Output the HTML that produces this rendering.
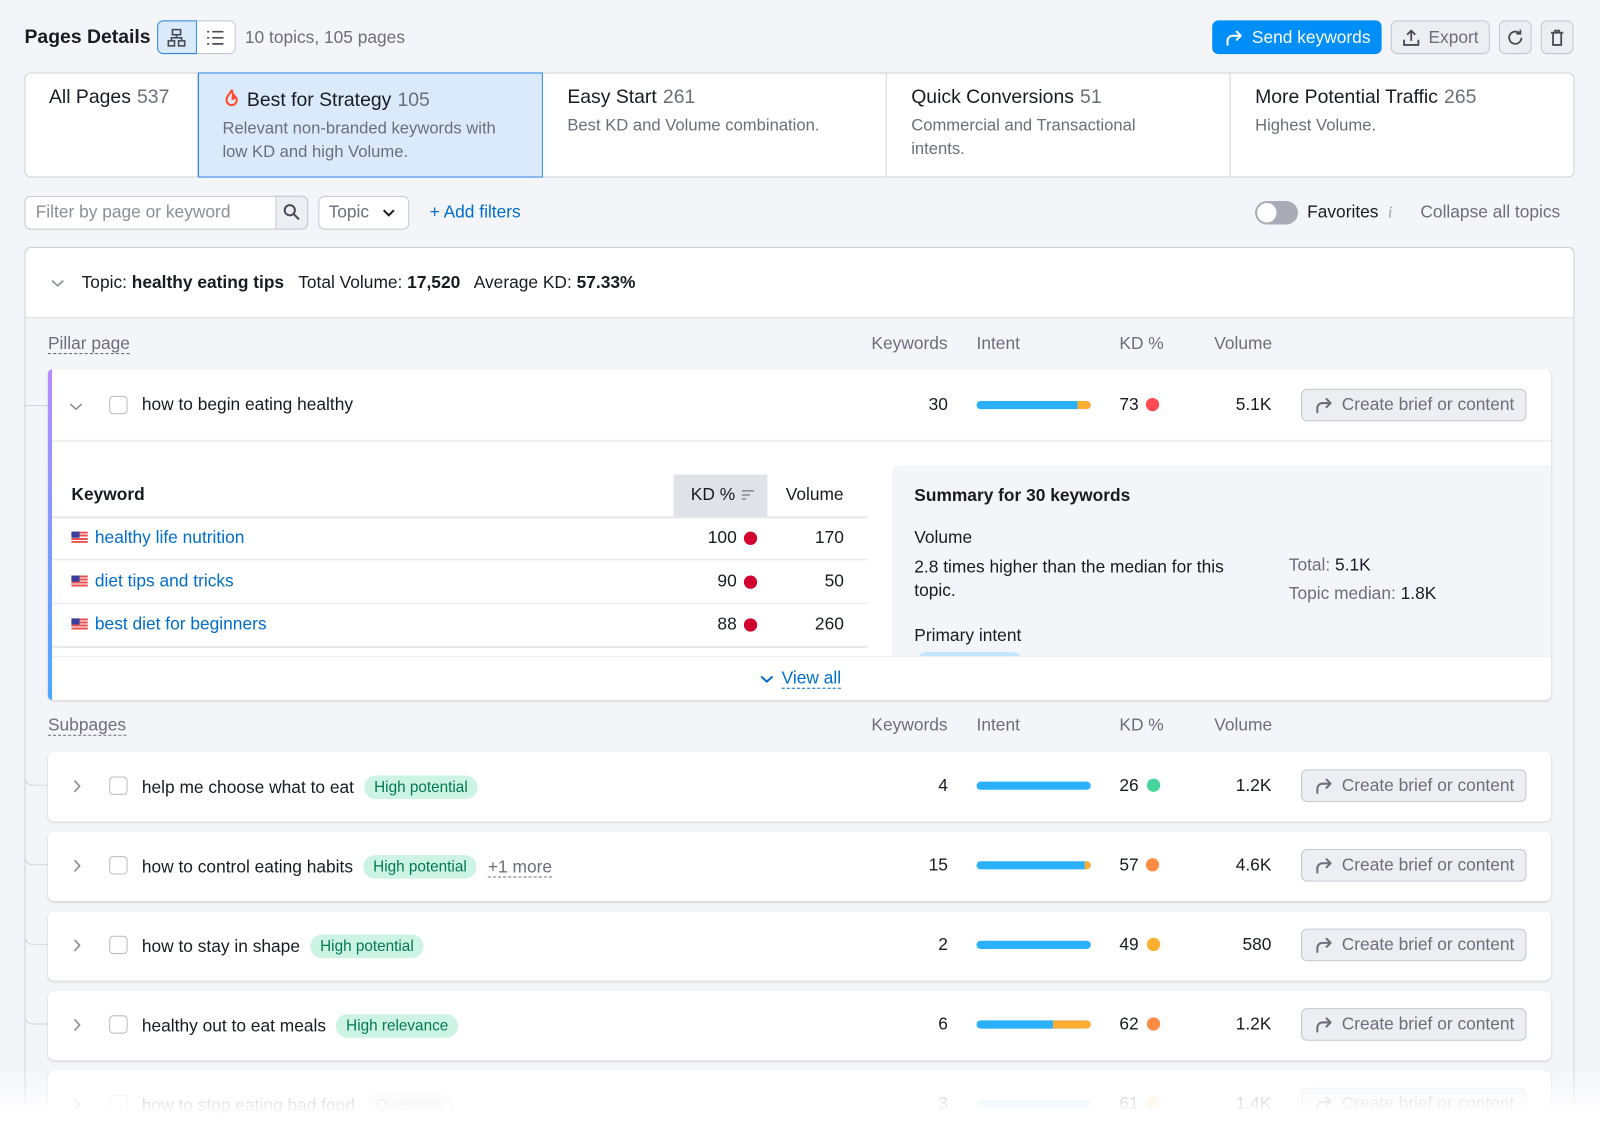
<!DOCTYPE html>
<html style="overflow:hidden;width:1600px;height:1127px"><head><meta charset="utf-8"><style>
*{box-sizing:border-box;margin:0;padding:0}
body{width:1600px;height:1127px;overflow:hidden;background:#f4f5f9;font-family:"Liberation Sans",sans-serif;color:#191b23;font-size:17px;position:relative}
#w{position:absolute;left:0;top:0;width:1568px;height:1105px;overflow:hidden;transform:scale(1.0204);transform-origin:0 0}
.a{position:absolute;white-space:nowrap}
.g{color:#6c6e79}
.btn{position:absolute;border:1px solid #c4c7cf;border-radius:6px;background:#edeef2;color:#6c6e79;display:flex;align-items:center;justify-content:center;gap:8px;font-size:17px}
.tab{position:absolute;top:71px;height:103px;padding:14px 24px;border-right:1px solid #d0d2d8}
.tab b{font-weight:normal;font-size:19px;color:#191b23}
.tab .n{font-size:19px;color:#6c6e79;margin-left:6px}
.tab p{color:#6c6e79;font-size:16.3px;line-height:23px;margin-top:5px}
.row{position:absolute;left:47px;width:1473px;height:68px;background:#fff;border-radius:6px;box-shadow:0 1px 2px rgba(0,0,0,.12)}
.cb{position:absolute;width:18px;height:18px;border:1px solid #b8bbc3;border-radius:4px;background:#fff}
.bar{position:absolute;left:957px;width:112px;height:8px;border-radius:4px;background:#2bb0fb;overflow:hidden}
.bar i{position:absolute;right:0;top:0;bottom:0;background:#ffae32}
.dot{position:absolute;width:13px;height:13px;border-radius:50%}
.tag{display:inline-block;background:#cdf3e5;color:#00794d;font-size:15px;padding:3px 10px;border-radius:12px;margin-left:5px;vertical-align:1px}
.cbtn{position:absolute;left:1275px;width:221px;height:32px}
.ul{border-bottom:1px dashed #6c6e79}
.kw{color:#006dca}
.flag{display:inline-block;width:16px;height:11px;background:repeating-linear-gradient(#e84f4f 0 2px,#fff 2px 3px);position:relative;vertical-align:0;margin-right:7px}
.flag:before{content:"";position:absolute;left:0;top:0;width:8px;height:6px;background:#3a3f9e}
</style></head><body><div id="w">
<svg width="0" height="0" style="position:absolute"><defs><symbol id="arr" viewBox="0 0 20 20"><path d="M4 17v-4a5 5 0 0 1 5-5h8M13 4l4 4-4 4" fill="none" stroke="currentColor" stroke-width="2" stroke-linecap="round" stroke-linejoin="round"/></symbol></defs></svg>

<div class="a" style="left:24px;top:26px;font-size:19px;font-weight:bold">Pages Details</div>
<div class="a" style="left:154px;top:20px;width:77px;height:33px;border:1px solid #c4c7cf;border-radius:6px;background:#fff"></div>
<div class="a" style="left:154px;top:20px;width:39px;height:33px;border:1px solid #2b8ae6;border-radius:6px 0 0 6px;background:#dbeafb"></div>
<svg class="a" style="left:164px;top:28px" width="18" height="18" viewBox="0 0 18 18" fill="none" stroke="#4a4d57" stroke-width="1.6"><rect x="5" y="1" width="8" height="5"/><rect x="1" y="12" width="6" height="5"/><rect x="11" y="12" width="6" height="5"/><path d="M9 6v3M4 12V9h10v3"/></svg>
<svg class="a" style="left:202px;top:28px" width="18" height="18" viewBox="0 0 18 18" stroke="#4a4d57" stroke-width="1.6"><path d="M6 3h11M6 9h11M6 15h11M1 3h2M1 9h2M1 15h2"/></svg>
<div class="a g" style="left:240px;top:27px">10 topics, 105 pages</div>

<div class="btn" style="left:1188px;top:20px;width:166px;height:33px;background:#008ff8;border-color:#008ff8;color:#fff"><svg width="20" height="20" style="color:#fff"><use href="#arr"/></svg>Send keywords</div>
<div class="btn" style="left:1363px;top:20px;width:97px;height:33px"><svg width="18" height="18" viewBox="0 0 18 18" fill="none" stroke="#4a4d57" stroke-width="1.8"><path d="M9 12V2M5 6l4-4 4 4M2 11v5h14v-5"/></svg>Export</div>
<div class="btn" style="left:1469px;top:20px;width:32px;height:33px"><svg width="18" height="18" viewBox="0 0 18 18" fill="none" stroke="#4a4d57" stroke-width="1.8"><path d="M15 9a6 6 0 1 1-2-4.5M14 1v4h-4"/></svg></div>
<div class="btn" style="left:1510px;top:20px;width:32px;height:33px"><svg width="18" height="18" viewBox="0 0 18 18" fill="none" stroke="#4a4d57" stroke-width="1.8"><path d="M3 4h12M7 4V2h4v2M5 4v12h8V4"/></svg></div>

<div class="a" style="left:24px;top:71px;width:1519px;height:103px;background:#fff;border:1px solid #d0d2d8;border-radius:6px"></div>
<div class="tab" style="left:24px;width:170px"><b>All Pages</b><span class="n">537</span></div>
<div class="tab" style="left:194px;width:338px;background:#dbeafb;border:1px solid #2b8ae6;padding-left:23px"><svg width="18" height="20" viewBox="0 0 18 20" style="vertical-align:-2px;margin-right:6px" fill="none" stroke="#ff4b2b" stroke-width="2"><path d="M9 2c0 3-5 5-5 10a5 5 0 0 0 10 0c0-2-1-3-2-4 0 2-1 3-2 3 0-2 1-5-1-9z"/></svg><b>Best for Strategy</b><span class="n">105</span><p>Relevant non-branded keywords with<br>low KD and high Volume.</p></div>
<div class="tab" style="left:532px;width:337px"><b>Easy Start</b><span class="n">261</span><p>Best KD and Volume combination.</p></div>
<div class="tab" style="left:869px;width:337px"><b>Quick Conversions</b><span class="n">51</span><p>Commercial and Transactional<br>intents.</p></div>
<div class="tab" style="left:1206px;width:337px;border:none"><b>More Potential Traffic</b><span class="n">265</span><p>Highest Volume.</p></div>

<div class="a" style="left:24px;top:192px;width:278px;height:33px;border:1px solid #c4c7cf;border-radius:6px;background:#fff"></div>
<div class="a" style="left:270px;top:192px;width:32px;height:33px;border:1px solid #c4c7cf;border-radius:0 6px 6px 0;background:#edeef2"></div>
<svg class="a" style="left:277px;top:199px" width="18" height="18" viewBox="0 0 18 18" fill="none" stroke="#4a4d57" stroke-width="2"><circle cx="7" cy="7" r="5"/><path d="M11 11l5 5"/></svg>
<div class="a" style="left:35px;top:198px;color:#8b8e98">Filter by page or keyword</div>
<div class="a" style="left:312px;top:192px;width:89px;height:33px;border:1px solid #c4c7cf;border-radius:6px;background:#fff"></div>
<div class="a g" style="left:322px;top:198px">Topic</div>
<svg class="a" style="left:375px;top:204px" width="12" height="9" viewBox="0 0 12 9" fill="none" stroke="#191b23" stroke-width="2"><path d="M1 2l5 5 5-5"/></svg>
<div class="a" style="left:421px;top:198px;color:#006dca">+ Add filters</div>

<div class="a" style="left:1230px;top:197px;width:42px;height:23px;border-radius:12px;background:#a9acb6"></div>
<div class="a" style="left:1232px;top:199px;width:19px;height:19px;border-radius:50%;background:#fff"></div>
<div class="a" style="left:1281px;top:198px">Favorites</div>
<div class="a" style="left:1360px;top:198px;color:#a0a3ac;font-style:italic;font-family:'Liberation Serif',serif">i</div>
<div class="a g" style="left:1392px;top:198px">Collapse all topics</div>

<div class="a" style="left:24px;top:242px;width:1519px;height:880px;border:1px solid #d0d2d8;border-radius:6px;background:#f4f5f9"></div>
<div class="a" style="left:25px;top:243px;width:1517px;height:69px;background:#fff;border-bottom:1px solid #d0d2d8;border-radius:6px 6px 0 0"></div>
<svg class="a" style="left:50px;top:273px" width="13" height="9" viewBox="0 0 13 9" fill="none" stroke="#8b8e98" stroke-width="1.6"><path d="M1 2l5.5 5 5.5-5"/></svg>
<div class="a" style="left:80px;top:267px">Topic: <b>healthy eating tips</b>&nbsp;&nbsp; Total Volume: <b>17,520</b>&nbsp;&nbsp; Average KD: <b>57.33%</b></div>

<div class="a g" style="left:47px;top:327px"><span class="ul">Pillar page</span></div>
<div class="a g" style="left:854px;top:327px">Keywords</div><div class="a g" style="left:957px;top:327px">Intent</div><div class="a g" style="left:1097px;top:327px">KD %</div><div class="a g" style="left:1190px;top:327px">Volume</div>

<div class="a" style="left:24px;top:397px;width:23px;height:1px;background:#d0d2d8"></div>
<div class="a" style="left:24px;top:750px;width:23px;height:20px;border-left:1px solid #d0d2d8;border-bottom:1px solid #d0d2d8;border-radius:0 0 0 8px"></div>
<div class="a" style="left:24px;top:828px;width:23px;height:20px;border-left:1px solid #d0d2d8;border-bottom:1px solid #d0d2d8;border-radius:0 0 0 8px"></div>
<div class="a" style="left:24px;top:906px;width:23px;height:20px;border-left:1px solid #d0d2d8;border-bottom:1px solid #d0d2d8;border-radius:0 0 0 8px"></div>
<div class="a" style="left:24px;top:984px;width:23px;height:20px;border-left:1px solid #d0d2d8;border-bottom:1px solid #d0d2d8;border-radius:0 0 0 8px"></div>

<div class="a" style="left:47px;top:362px;width:1473px;height:324px;background:#fff;border-radius:6px;box-shadow:0 1px 2px rgba(0,0,0,.12)"></div>
<div class="a" style="left:47px;top:362px;width:4px;height:324px;border-radius:4px 0 0 4px;background:linear-gradient(#b78cff,#4aa8ff)"></div>
<div class="a" style="left:51px;top:431px;width:1469px;height:2px;background:#eceef2"></div>
<svg class="a" style="left:68px;top:394px" width="13" height="9" viewBox="0 0 13 9" fill="none" stroke="#8b8e98" stroke-width="1.6"><path d="M1 2l5.5 5 5.5-5"/></svg>
<div class="cb" style="left:107px;top:388px"></div>
<div class="a" style="left:139px;top:387px">how to begin eating healthy</div>
<div class="a" style="left:889px;top:387px;width:40px;text-align:right">30</div>
<div class="bar" style="top:393px"><i style="width:13px"></i></div>
<div class="a" style="left:1097px;top:387px">73</div><div class="dot" style="left:1123px;top:390px;background:#ff4953"></div>
<div class="a" style="left:1186px;top:387px;width:60px;text-align:right">5.1K</div>
<div class="btn cbtn" style="top:381px"><svg width="20" height="20"><use href="#arr"/></svg>Create brief or content</div>

<div class="a" style="left:660px;top:465px;width:92px;height:41px;background:#e0e1e9"></div>
<div class="a" style="left:70px;top:475px;font-weight:bold">Keyword</div>
<div class="a" style="left:677px;top:475px">KD %</div>
<svg class="a" style="left:726px;top:479px" width="14" height="12" viewBox="0 0 14 12" stroke="#8b8e98" stroke-width="1.6"><path d="M1 2h12M1 6h8M1 10h4"/></svg>
<div class="a" style="left:770px;top:475px">Volume</div>
<div class="a" style="left:51px;top:506px;width:799px;height:2px;background:#e6e7eb"></div>
<div class="a" style="left:51px;top:548px;width:799px;height:1px;background:#e6e7eb"></div>
<div class="a" style="left:51px;top:591px;width:799px;height:1px;background:#e6e7eb"></div>
<div class="a" style="left:51px;top:633px;width:799px;height:2px;background:#e6e7eb"></div>
<div class="a" style="left:70px;top:517px"><span class="flag"></span><span class="kw">healthy life nutrition</span></div>
<div class="a" style="left:670px;top:517px;width:52px;text-align:right">100</div><div class="dot" style="left:729px;top:521px;background:#d1002f"></div><div class="a" style="left:770px;top:517px;width:57px;text-align:right">170</div>
<div class="a" style="left:70px;top:560px"><span class="flag"></span><span class="kw">diet tips and tricks</span></div>
<div class="a" style="left:670px;top:560px;width:52px;text-align:right">90</div><div class="dot" style="left:729px;top:564px;background:#d1002f"></div><div class="a" style="left:770px;top:560px;width:57px;text-align:right">50</div>
<div class="a" style="left:70px;top:602px"><span class="flag"></span><span class="kw">best diet for beginners</span></div>
<div class="a" style="left:670px;top:602px;width:52px;text-align:right">88</div><div class="dot" style="left:729px;top:606px;background:#d1002f"></div><div class="a" style="left:770px;top:602px;width:57px;text-align:right">260</div>

<div class="a" style="left:874px;top:456px;width:646px;height:187px;background:#f4f5f9;border-radius:8px 0 0 0;overflow:hidden">
<div class="a" style="left:22px;top:20px;font-weight:bold">Summary for 30 keywords</div>
<div class="a" style="left:22px;top:61px">Volume</div>
<div class="a" style="left:22px;top:88px;line-height:23px">2.8 times higher than the median for this<br>topic.</div>
<div class="a" style="left:389px;top:88px"><span class="g">Total:</span> 5.1K</div>
<div class="a" style="left:389px;top:116px"><span class="g">Topic median:</span> 1.8K</div>
<div class="a" style="left:22px;top:157px">Primary intent</div>
<div class="a" style="left:24px;top:183px;width:104px;height:20px;border-radius:10px;background:#c2e7ff"></div>
</div>
<div class="a" style="left:51px;top:643px;width:1469px;height:1px;background:#eceef2"></div>
<svg class="a" style="left:745px;top:661px" width="13" height="9" viewBox="0 0 13 9" fill="none" stroke="#006dca" stroke-width="2"><path d="M1 2l5.5 5 5.5-5"/></svg>
<div class="a" style="left:766px;top:655px;color:#006dca"><span style="border-bottom:1px dashed #006dca">View all</span></div>

<div class="a g" style="left:47px;top:701px"><span class="ul">Subpages</span></div>
<div class="a g" style="left:854px;top:701px">Keywords</div><div class="a g" style="left:957px;top:701px">Intent</div><div class="a g" style="left:1097px;top:701px">KD %</div><div class="a g" style="left:1190px;top:701px">Volume</div>

<div class="row" style="top:737px"></div>
<div class="row" style="top:815px"></div>
<div class="row" style="top:893px"></div>
<div class="row" style="top:971px"></div>
<div class="row" style="top:1049px"></div>

<svg class="a" style="left:71px;top:764px" width="9" height="13" viewBox="0 0 9 13" fill="none" stroke="#8b8e98" stroke-width="1.6"><path d="M2 1l5 5.5-5 5.5"/></svg>
<div class="cb" style="left:107px;top:761px"></div>
<div class="a" style="left:139px;top:760px">help me choose what to eat <span class="tag">High potential</span></div>
<div class="a" style="left:889px;top:760px;width:40px;text-align:right">4</div>
<div class="bar" style="top:766px"></div>
<div class="a" style="left:1097px;top:760px">26</div><div class="dot" style="left:1124px;top:763px;background:#45d59c"></div>
<div class="a" style="left:1186px;top:760px;width:60px;text-align:right">1.2K</div>
<div class="btn cbtn" style="top:754px"><svg width="20" height="20"><use href="#arr"/></svg>Create brief or content</div>

<svg class="a" style="left:71px;top:842px" width="9" height="13" viewBox="0 0 9 13" fill="none" stroke="#8b8e98" stroke-width="1.6"><path d="M2 1l5 5.5-5 5.5"/></svg>
<div class="cb" style="left:107px;top:839px"></div>
<div class="a" style="left:139px;top:838px">how to control eating habits <span class="tag">High potential</span> <span class="g ul" style="margin-left:6px">+1 more</span></div>
<div class="a" style="left:889px;top:838px;width:40px;text-align:right">15</div>
<div class="bar" style="top:844px"><i style="width:6px"></i></div>
<div class="a" style="left:1097px;top:838px">57</div><div class="dot" style="left:1123px;top:841px;background:#ff8c43"></div>
<div class="a" style="left:1186px;top:838px;width:60px;text-align:right">4.6K</div>
<div class="btn cbtn" style="top:832px"><svg width="20" height="20"><use href="#arr"/></svg>Create brief or content</div>

<svg class="a" style="left:71px;top:920px" width="9" height="13" viewBox="0 0 9 13" fill="none" stroke="#8b8e98" stroke-width="1.6"><path d="M2 1l5 5.5-5 5.5"/></svg>
<div class="cb" style="left:107px;top:917px"></div>
<div class="a" style="left:139px;top:916px">how to stay in shape <span class="tag">High potential</span></div>
<div class="a" style="left:889px;top:916px;width:40px;text-align:right">2</div>
<div class="bar" style="top:922px"></div>
<div class="a" style="left:1097px;top:916px">49</div><div class="dot" style="left:1124px;top:919px;background:#ffae32"></div>
<div class="a" style="left:1186px;top:916px;width:60px;text-align:right">580</div>
<div class="btn cbtn" style="top:910px"><svg width="20" height="20"><use href="#arr"/></svg>Create brief or content</div>

<svg class="a" style="left:71px;top:998px" width="9" height="13" viewBox="0 0 9 13" fill="none" stroke="#8b8e98" stroke-width="1.6"><path d="M2 1l5 5.5-5 5.5"/></svg>
<div class="cb" style="left:107px;top:995px"></div>
<div class="a" style="left:139px;top:994px">healthy out to eat meals <span class="tag">High relevance</span></div>
<div class="a" style="left:889px;top:994px;width:40px;text-align:right">6</div>
<div class="bar" style="top:1000px"><i style="width:37px"></i></div>
<div class="a" style="left:1097px;top:994px">62</div><div class="dot" style="left:1124px;top:997px;background:#ff8c43"></div>
<div class="a" style="left:1186px;top:994px;width:60px;text-align:right">1.2K</div>
<div class="btn cbtn" style="top:988px"><svg width="20" height="20"><use href="#arr"/></svg>Create brief or content</div>

<div style="opacity:.45">
<svg class="a" style="left:71px;top:1076px" width="9" height="13" viewBox="0 0 9 13" fill="none" stroke="#8b8e98" stroke-width="1.6"><path d="M2 1l5 5.5-5 5.5"/></svg>
<div class="cb" style="left:107px;top:1073px"></div>
<div class="a" style="left:139px;top:1072px">how to stop eating bad food <span class="tag" style="background:#eceef2;color:#8b8e98">Questions</span></div>
<div class="a" style="left:889px;top:1072px;width:40px;text-align:right">3</div>
<div class="bar" style="top:1078px;background:#8fd3fc"></div>
<div class="a" style="left:1097px;top:1072px">61</div><div class="dot" style="left:1123px;top:1075px;background:#ffc690"></div>
<div class="a" style="left:1186px;top:1072px;width:60px;text-align:right">1.4K</div>
<div class="btn cbtn" style="top:1066px"><svg width="20" height="20"><use href="#arr"/></svg>Create brief or content</div>
</div>
<div class="a" style="left:0;top:1045px;width:1568px;height:60px;background:linear-gradient(rgba(255,255,255,0),#fff 80%)"></div>
</div></body></html>
